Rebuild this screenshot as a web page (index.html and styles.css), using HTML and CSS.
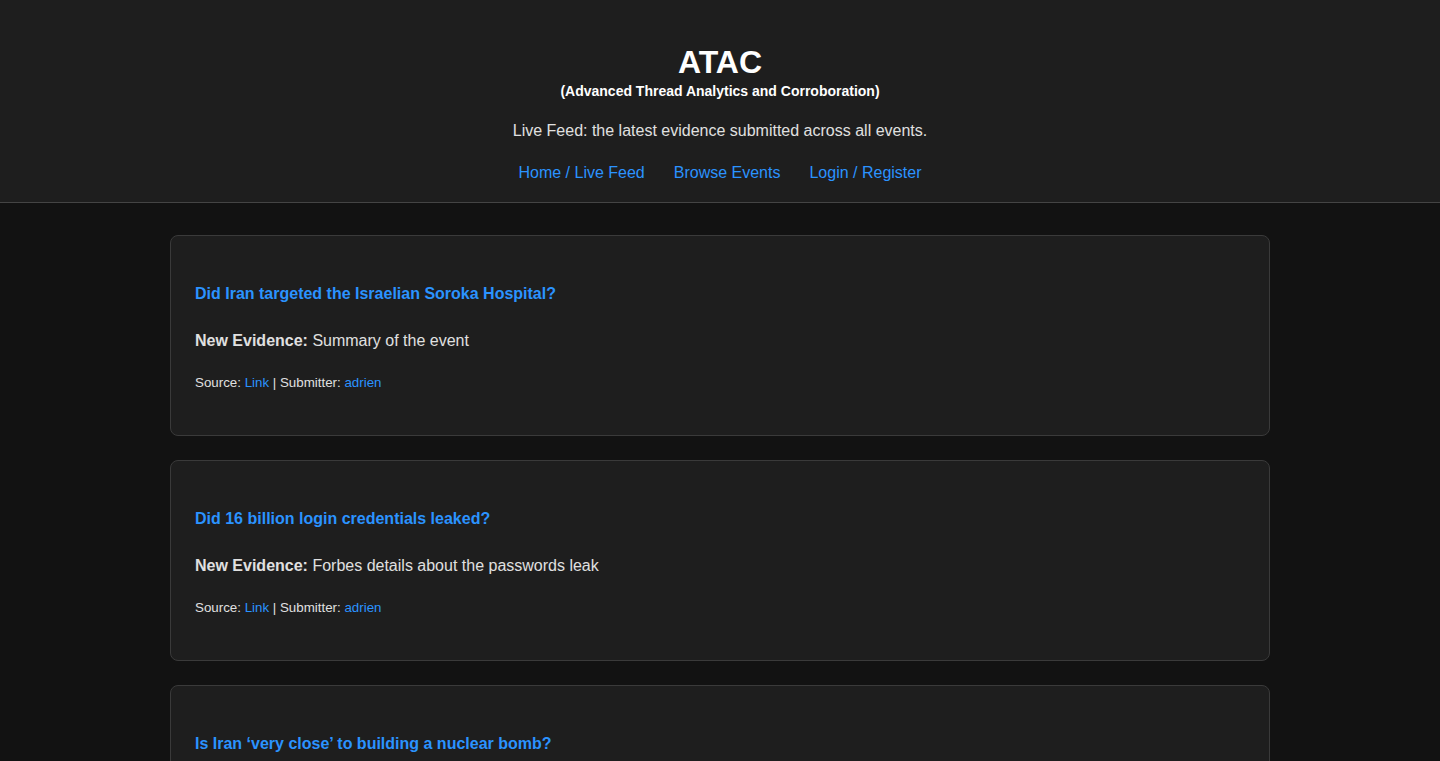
FILE: index.html
```html
<!DOCTYPE html>
<html lang="en">
<head>
    <meta charset="UTF-8">
    <meta name="viewport" content="width=device-width, initial-scale=1.0">
    <title>ATAC - Live Feed</title>
    <link rel="stylesheet" href="styles.css">
</head>
<body>
    <header class="site-header">
        <h1>ATAC</h1>
        <div class="subtitle">(Advanced Thread Analytics and Corroboration)</div>
        <p class="tagline">Live Feed: the latest evidence submitted across all events.</p>
        <nav class="nav">
            <a href="#">Home / Live Feed</a>
            <a href="#">Browse Events</a>
            <a href="#">Login / Register</a>
        </nav>
    </header>

    <main class="feed">
        <div class="card">
            <a class="card-title" href="#">Did Iran targeted the Israelian Soroka Hospital?</a>
            <p class="evidence"><strong>New Evidence:</strong> Summary of the event</p>
            <p class="meta">Source: <a href="#">Link</a> | Submitter: <a href="#">adrien</a></p>
        </div>
        <div class="card">
            <a class="card-title" href="#">Did 16 billion login credentials leaked?</a>
            <p class="evidence"><strong>New Evidence:</strong> Forbes details about the passwords leak</p>
            <p class="meta">Source: <a href="#">Link</a> | Submitter: <a href="#">adrien</a></p>
        </div>
        <div class="card">
            <a class="card-title" href="#">Is Iran ‘very close’ to building a nuclear bomb?</a>
            <p class="evidence"><strong>New Evidence:</strong> IAEA report on enrichment levels</p>
            <p class="meta">Source: <a href="#">Link</a> | Submitter: <a href="#">adrien</a></p>
        </div>
    </main>
</body>
</html>
```

FILE: styles.css
```css
body {
    margin: 0;
    font-family: "Liberation Sans", Arial, sans-serif;
    background-color: #121212;
    color: #e0e0e0;
}
a {
    color: #2b93ff;
    text-decoration: none;
}
.site-header {
    background: #1e1e1e;
    border-bottom: 1px solid #444;
    padding: 44px 20px 20px;
    text-align: center;
}
.site-header h1 {
    margin: 0;
    font-size: 32px;
    line-height: 36px;
    color: #fff;
}
.subtitle {
    margin-top: 3px;
    font-size: 14px;
    line-height: 16px;
    font-weight: bold;
    color: #fff;
}
.tagline {
    margin: 23px 0 0;
    font-size: 16px;
    line-height: 18px;
    color: #e0e0e0;
}
.nav {
    margin-top: 24px;
    display: flex;
    justify-content: center;
    gap: 29px;
    font-size: 16px;
    line-height: 18px;
}
.feed {
    width: 1100px;
    margin: 32px auto 0;
    display: flex;
    flex-direction: column;
    gap: 24px;
}
.card {
    background: #1e1e1e;
    border: 1px solid #3a3a3a;
    border-radius: 8px;
    padding: 49px 24px 45px;
    display: flex;
    flex-direction: column;
    align-items: flex-start;
}
.card-title {
    font-size: 16px;
    line-height: 18px;
    font-weight: bold;
}
.evidence {
    margin: 29px 0 0;
    font-size: 16px;
    line-height: 18px;
}
.meta {
    margin: 25px 0 0;
    font-size: 13.33px;
    line-height: 15px;
}
```
